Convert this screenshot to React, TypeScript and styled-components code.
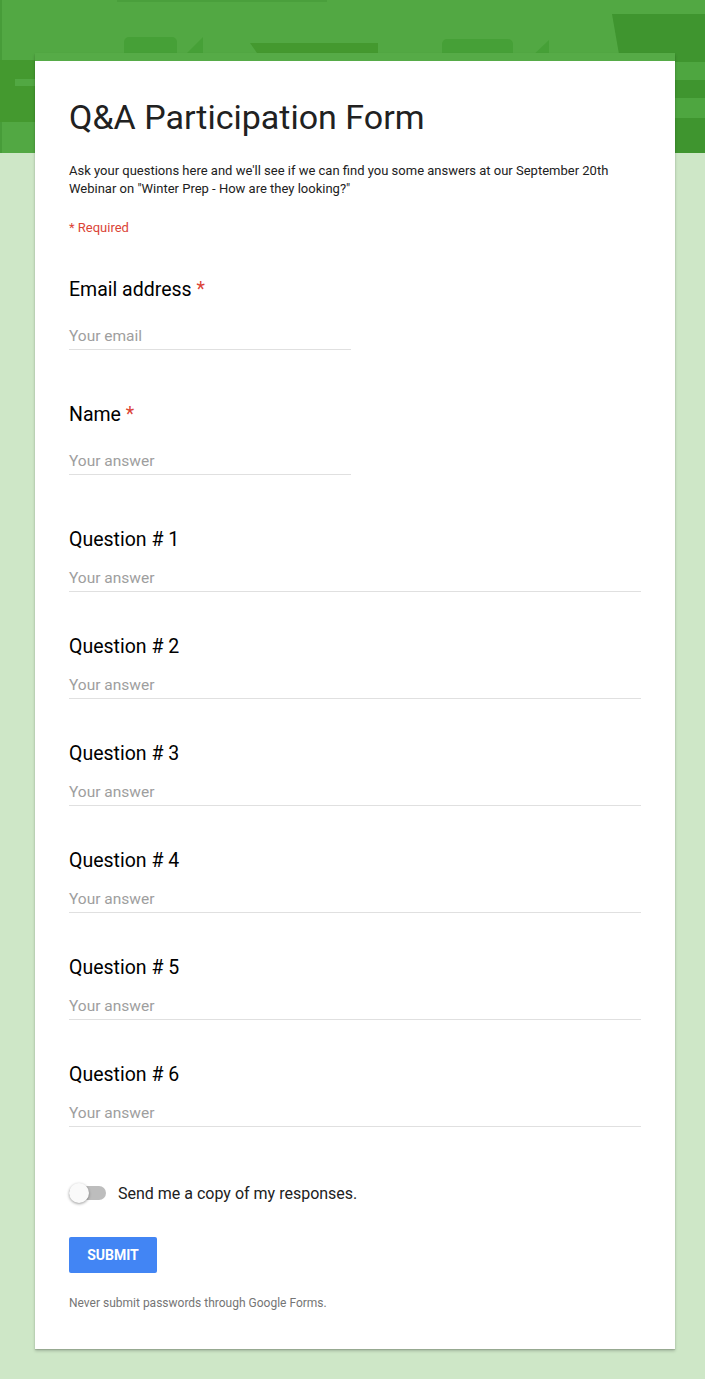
import styled, { createGlobalStyle } from "styled-components";

const GlobalStyle = createGlobalStyle`
  html, body {
    margin: 0;
    padding: 0;
  }
  body {
    font-family: Roboto, "Noto Sans", Arial, sans-serif;
    background: #cee7c7;
  }
`;

const questions = [
  "Question # 1",
  "Question # 2",
  "Question # 3",
  "Question # 4",
  "Question # 5",
  "Question # 6",
];

// background pattern of the green header band
const HeaderArt = () => (
  <Art width="705" height="153" viewBox="0 0 705 153" preserveAspectRatio="none">
    <rect x="0" y="0" width="705" height="153" fill="#52a843" />
    <rect x="117" y="0" width="210" height="2" fill="#4a9f3c" />
    <rect x="0" y="0" width="2" height="153" fill="#479c39" />
    <rect x="0" y="60" width="35" height="62" fill="#44992f" />
    <rect x="15" y="79" width="20" height="7" fill="#52a843" />
    <rect x="124" y="37" width="53" height="30" rx="5" fill="#46a037" />
    <polygon points="203,37 203,60 180,60" fill="#46a037" />
    <polygon points="250,43 378,43 378,60 262,60" fill="#44992f" />
    <rect x="442" y="39" width="71" height="30" rx="5" fill="#46a037" />
    <polygon points="549,40 549,60 528,60" fill="#46a037" />
    <polygon points="612,14 705,14 705,153 660,153 620,60" fill="#3f952f" />
    <rect x="675" y="62" width="30" height="18" fill="#4ea640" />
    <rect x="675" y="98" width="30" height="20" fill="#4ea640" />
  </Art>
);

export default function App() {
  return (
    <>
      <GlobalStyle />
      <Page>
        <HeaderArt />
        <Card>
          <Intro>
            <Title>Q&amp;A Participation Form</Title>
            <Description>
              Ask your questions here and we'll see if we can find you some answers at our
              September 20th Webinar on "Winter Prep - How are they looking?"
            </Description>
            <RequiredNote>* Required</RequiredNote>
          </Intro>

          <Question $short>
            <Label>
              Email address <Star>*</Star>
            </Label>
            <Field $short>
              <Placeholder>Your email</Placeholder>
            </Field>
          </Question>

          <Question $short>
            <Label>
              Name <Star>*</Star>
            </Label>
            <Field $short>
              <Placeholder>Your answer</Placeholder>
            </Field>
          </Question>

          {questions.map((q) => (
            <Question key={q}>
              <Label>{q}</Label>
              <Field>
                <Placeholder>Your answer</Placeholder>
              </Field>
            </Question>
          ))}

          <ToggleRow>
            <Switch>
              <Knob />
            </Switch>
            <ToggleText>Send me a copy of my responses.</ToggleText>
          </ToggleRow>

          <SubmitButton type="button">SUBMIT</SubmitButton>

          <Footnote>Never submit passwords through Google Forms.</Footnote>
        </Card>
      </Page>
    </>
  );
}

const Page = styled.div`
  position: relative;
  min-height: 1379px;
  padding: 53px 0 30px 35px;
  box-sizing: border-box;
  overflow: hidden;
`;

const Art = styled.svg`
  position: absolute;
  top: 0;
  left: 0;
  display: block;
`;

const Card = styled.div`
  position: relative;
  width: 640px;
  box-sizing: border-box;
  background: #fff;
  border-top: 8px solid #56ab47;
  padding: 36px 34px 38px 34px;
  box-shadow: 0 2px 3px rgba(0, 0, 0, 0.2), 0 1px 1px rgba(0, 0, 0, 0.12);
`;

const Intro = styled.div`
  display: flex;
  flex-direction: column;
  margin-bottom: 41px;
`;

const Title = styled.h1`
  margin: 0;
  font-size: 34px;
  line-height: 40px;
  font-weight: 400;
  color: #212121;
`;

const Description = styled.p`
  margin: 25px 0 0;
  font-size: 13px;
  line-height: 18px;
  color: #212121;
`;

const RequiredNote = styled.div`
  margin-top: 21px;
  font-size: 13px;
  line-height: 18px;
  color: #db4437;
`;

const Question = styled.div<{ $short?: boolean }>`
  display: flex;
  flex-direction: column;
  gap: ${(p) => (p.$short ? "22px" : "14px")};
  margin-bottom: ${(p) => (p.$short ? "53px" : "43px")};
`;

const Label = styled.div`
  font-size: 19.5px;
  line-height: 24px;
  color: #000;
`;

const Star = styled.span`
  color: #db4437;
`;

const Field = styled.div<{ $short?: boolean }>`
  width: ${(p) => (p.$short ? "282px" : "100%")};
  border-bottom: 1px solid #e0e0e0;
  padding-bottom: 1px;
`;

const Placeholder = styled.span`
  display: block;
  font-size: 15.5px;
  line-height: 24px;
  color: #9e9e9e;
`;

const ToggleRow = styled.div`
  display: flex;
  align-items: center;
  gap: 12px;
  height: 24px;
  margin-top: 54px;
`;

const Switch = styled.div`
  position: relative;
  width: 37px;
  height: 14px;
  border-radius: 7px;
  background: #bdbdbd;
`;

const Knob = styled.span`
  position: absolute;
  left: 0;
  top: -3px;
  width: 20px;
  height: 20px;
  border-radius: 50%;
  background: #fafafa;
  box-shadow: 0 1px 3px rgba(0, 0, 0, 0.4);
`;

const ToggleText = styled.span`
  font-size: 16px;
  color: #212121;
`;

const SubmitButton = styled.button`
  display: block;
  margin-top: 32px;
  width: 88px;
  height: 36px;
  border: none;
  border-radius: 2px;
  background: #4285f4;
  color: #fff;
  font-family: Roboto, Arial, sans-serif;
  font-size: 14px;
  font-weight: 700;
  letter-spacing: 0;
`;

const Footnote = styled.div`
  margin-top: 22px;
  font-size: 12px;
  line-height: 16px;
  color: #757575;
`;
